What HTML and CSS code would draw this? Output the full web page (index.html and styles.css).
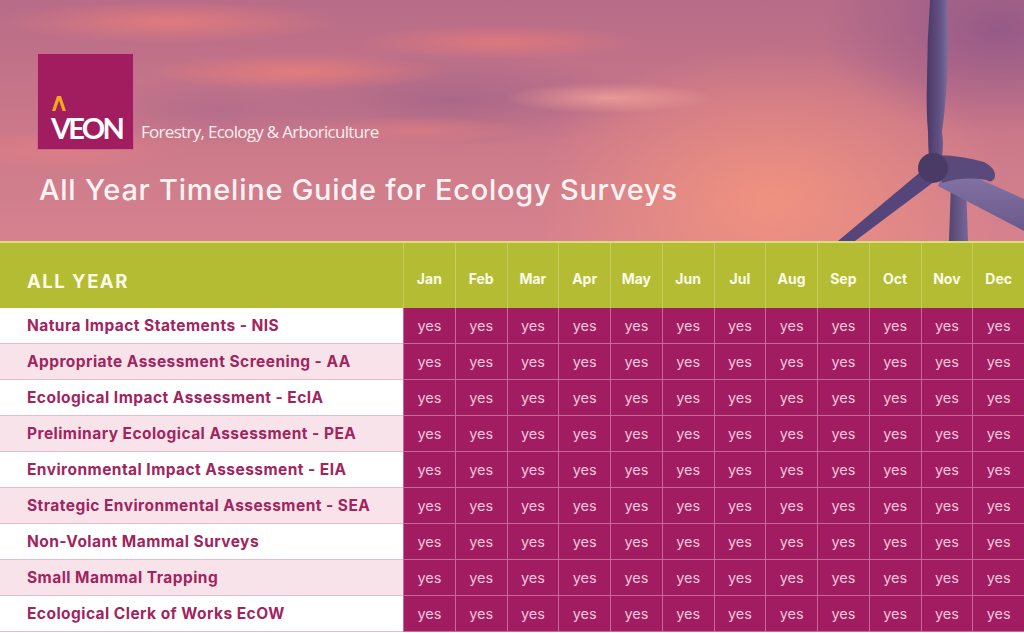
FILE: index.html
```html
<!DOCTYPE html>
<html lang="en">
<head>
<meta charset="utf-8">
<title>All Year Timeline Guide for Ecology Surveys</title>
<link rel="stylesheet" href="styles.css">
</head>
<body>
<div class="page">
  <header class="hero">
    <svg class="turbine" viewBox="0 0 200 241" width="200" height="241" aria-hidden="true">
      <defs>
        <linearGradient id="blade" x1="0" y1="0" x2="1" y2="0">
          <stop offset="0" stop-color="#4a3966"/>
          <stop offset="0.55" stop-color="#5f4e80"/>
          <stop offset="1" stop-color="#7d6e9c"/>
        </linearGradient>
        <linearGradient id="bladeR" x1="0" y1="0" x2="0" y2="1">
          <stop offset="0" stop-color="#8778a8"/>
          <stop offset="1" stop-color="#6a5a8c"/>
        </linearGradient>
        <linearGradient id="tower" x1="0" y1="0" x2="1" y2="0">
          <stop offset="0" stop-color="#55456f"/>
          <stop offset="1" stop-color="#76679a"/>
        </linearGradient>
      </defs>
      <!-- tower -->
      <path d="M127 182 L142 182 L144 241 L125 241 Z" fill="url(#tower)"/>
      <!-- down-left blade -->
      <path d="M100 169 L111 181 L31 241 L14 241 Z" fill="#55457a"/>
      <!-- right blade -->
      <path d="M122 164 L200 199 L200 231 L114 186 Z" fill="url(#bladeR)"/>
      <!-- up blade -->
      <path d="M106 0 L123 0 Q125 40 123 80 Q121 110 118 132 Q120 145 118 156 L105 158 Q104 145 104 132 Q102 110 103 80 Q103 40 106 0 Z" fill="url(#blade)"/>
      <!-- nacelle -->
      <path d="M114 155 Q140 156 160 162 Q172 168 171 177 Q168 184 162 180 Q140 176 118 183 Z" fill="#5a4a7c"/>
      <!-- hub -->
      <ellipse cx="109" cy="168" rx="15" ry="15" fill="#4a3a66"/>
    </svg>
    <div class="brand">
      <div class="logo">
        <span class="caret">
          <svg viewBox="0 0 14 15" width="14" height="15" aria-hidden="true"><path d="M0 15 L5 0 L9 0 L14 15 L10.6 15 L7 4.6 L3.4 15 Z" fill="#f2a71e"/></svg>
        </span>
        <span class="logo-word">VEON</span>
      </div>
      <span class="tagline">Forestry, Ecology &amp; Arboriculture</span>
    </div>
    <h1 class="title">All Year Timeline Guide for Ecology Surveys</h1>
  </header>

  <section class="table">
    <div class="cell head head-label">ALL YEAR</div>
    <div class="cell head">Jan</div>
    <div class="cell head">Feb</div>
    <div class="cell head">Mar</div>
    <div class="cell head">Apr</div>
    <div class="cell head">May</div>
    <div class="cell head">Jun</div>
    <div class="cell head">Jul</div>
    <div class="cell head">Aug</div>
    <div class="cell head">Sep</div>
    <div class="cell head">Oct</div>
    <div class="cell head">Nov</div>
    <div class="cell head">Dec</div>

    <div class="cell label">Natura Impact Statements - NIS</div>
    <div class="cell yes">yes</div><div class="cell yes">yes</div><div class="cell yes">yes</div><div class="cell yes">yes</div><div class="cell yes">yes</div><div class="cell yes">yes</div><div class="cell yes">yes</div><div class="cell yes">yes</div><div class="cell yes">yes</div><div class="cell yes">yes</div><div class="cell yes">yes</div><div class="cell yes">yes</div>

    <div class="cell label alt">Appropriate Assessment Screening - AA</div>
    <div class="cell yes">yes</div><div class="cell yes">yes</div><div class="cell yes">yes</div><div class="cell yes">yes</div><div class="cell yes">yes</div><div class="cell yes">yes</div><div class="cell yes">yes</div><div class="cell yes">yes</div><div class="cell yes">yes</div><div class="cell yes">yes</div><div class="cell yes">yes</div><div class="cell yes">yes</div>

    <div class="cell label">Ecological Impact Assessment - EcIA</div>
    <div class="cell yes">yes</div><div class="cell yes">yes</div><div class="cell yes">yes</div><div class="cell yes">yes</div><div class="cell yes">yes</div><div class="cell yes">yes</div><div class="cell yes">yes</div><div class="cell yes">yes</div><div class="cell yes">yes</div><div class="cell yes">yes</div><div class="cell yes">yes</div><div class="cell yes">yes</div>

    <div class="cell label alt">Preliminary Ecological Assessment - PEA</div>
    <div class="cell yes">yes</div><div class="cell yes">yes</div><div class="cell yes">yes</div><div class="cell yes">yes</div><div class="cell yes">yes</div><div class="cell yes">yes</div><div class="cell yes">yes</div><div class="cell yes">yes</div><div class="cell yes">yes</div><div class="cell yes">yes</div><div class="cell yes">yes</div><div class="cell yes">yes</div>

    <div class="cell label">Environmental Impact Assessment - EIA</div>
    <div class="cell yes">yes</div><div class="cell yes">yes</div><div class="cell yes">yes</div><div class="cell yes">yes</div><div class="cell yes">yes</div><div class="cell yes">yes</div><div class="cell yes">yes</div><div class="cell yes">yes</div><div class="cell yes">yes</div><div class="cell yes">yes</div><div class="cell yes">yes</div><div class="cell yes">yes</div>

    <div class="cell label alt">Strategic Environmental Assessment - SEA</div>
    <div class="cell yes">yes</div><div class="cell yes">yes</div><div class="cell yes">yes</div><div class="cell yes">yes</div><div class="cell yes">yes</div><div class="cell yes">yes</div><div class="cell yes">yes</div><div class="cell yes">yes</div><div class="cell yes">yes</div><div class="cell yes">yes</div><div class="cell yes">yes</div><div class="cell yes">yes</div>

    <div class="cell label">Non-Volant Mammal Surveys</div>
    <div class="cell yes">yes</div><div class="cell yes">yes</div><div class="cell yes">yes</div><div class="cell yes">yes</div><div class="cell yes">yes</div><div class="cell yes">yes</div><div class="cell yes">yes</div><div class="cell yes">yes</div><div class="cell yes">yes</div><div class="cell yes">yes</div><div class="cell yes">yes</div><div class="cell yes">yes</div>

    <div class="cell label alt">Small Mammal Trapping</div>
    <div class="cell yes">yes</div><div class="cell yes">yes</div><div class="cell yes">yes</div><div class="cell yes">yes</div><div class="cell yes">yes</div><div class="cell yes">yes</div><div class="cell yes">yes</div><div class="cell yes">yes</div><div class="cell yes">yes</div><div class="cell yes">yes</div><div class="cell yes">yes</div><div class="cell yes">yes</div>

    <div class="cell label">Ecological Clerk of Works EcOW</div>
    <div class="cell yes">yes</div><div class="cell yes">yes</div><div class="cell yes">yes</div><div class="cell yes">yes</div><div class="cell yes">yes</div><div class="cell yes">yes</div><div class="cell yes">yes</div><div class="cell yes">yes</div><div class="cell yes">yes</div><div class="cell yes">yes</div><div class="cell yes">yes</div><div class="cell yes">yes</div>
  </section>
</div>
</body>
</html>
```

FILE: styles.css
```css
html, body {
  margin: 0;
  padding: 0;
}

body {
  font-family: "Inter", "Liberation Sans", sans-serif;
  background: #ffffff;
}

.page {
  width: 1024px;
  height: 633px;
  overflow: hidden;
  display: flex;
  flex-direction: column;
}

.hero {
  position: relative;
  height: 241px;
  flex: 0 0 241px;
  box-sizing: border-box;
  padding: 53px 0 0 37px;
  overflow: hidden;
  background:
    radial-gradient(ellipse 150px 22px at 610px 98px, rgba(248, 168, 155, 0.7), rgba(248, 168, 155, 0) 70%),
    radial-gradient(ellipse 220px 26px at 300px 72px, rgba(238, 128, 120, 0.7), rgba(238, 128, 120, 0) 70%),
    radial-gradient(ellipse 240px 30px at 170px 22px, rgba(238, 128, 120, 0.7), rgba(238, 128, 120, 0) 70%),
    radial-gradient(ellipse 200px 24px at 500px 42px, rgba(236, 124, 118, 0.65), rgba(236, 124, 118, 0) 70%),
    radial-gradient(ellipse 160px 20px at 420px 130px, rgba(236, 130, 124, 0.5), rgba(236, 130, 124, 0) 70%),
    radial-gradient(ellipse 180px 30px at 60px 150px, rgba(236, 128, 128, 0.55), rgba(236, 128, 128, 0) 70%),
    radial-gradient(ellipse 340px 220px at 770px 200px, rgba(244, 148, 126, 0.9), rgba(244, 148, 126, 0) 70%),
    radial-gradient(ellipse 260px 150px at 1000px 30px, rgba(140, 85, 135, 0.8), rgba(140, 85, 135, 0) 70%),
    radial-gradient(ellipse 280px 70px at 450px 100px, rgba(140, 90, 135, 0.5), rgba(140, 90, 135, 0) 70%),
    radial-gradient(ellipse 200px 50px at 220px 110px, rgba(150, 95, 140, 0.4), rgba(150, 95, 140, 0) 70%),
    linear-gradient(180deg, #b86c88 0%, #c87689 45%, #d6828e 100%);
}

.turbine {
  position: absolute;
  right: 0;
  top: 0;
}

.brand {
  position: relative;
  display: flex;
  align-items: flex-end;
}

.logo {
  width: 97px;
  height: 97px;
  box-sizing: border-box;
  background: #a21c60;
  border: 1px solid #c96a95;
  display: flex;
  flex-direction: column;
  justify-content: flex-end;
  padding: 0 0 10px 13px;
}

.caret {
  display: block;
  line-height: 0;
  margin: 0 0 6px 1px;
}

.logo-word {
  color: #ffffff;
  font-family: "Lato", "Liberation Sans", sans-serif;
  font-weight: 700;
  font-size: 29px;
  line-height: 22px;
  letter-spacing: -2.8px;
}

.tagline {
  color: #fbeef0;
  font-family: "Open Sans", "Liberation Sans", sans-serif;
  font-size: 17px;
  line-height: 17px;
  margin: 0 0 10px 7px;
  letter-spacing: -0.7px;
}

.title {
  position: relative;
  margin: 23px 0 0 2px;
  color: #fdf3f3;
  font-family: "Inter", "Liberation Sans", sans-serif;
  font-weight: 500;
  font-size: 29px;
  line-height: 34px;
  letter-spacing: 0.75px;
}

.table {
  display: grid;
  grid-template-columns: 403px repeat(12, 1fr);
  grid-template-rows: 65px repeat(9, 36px);
  flex: 1 1 auto;
  border-top: 2px solid #d8de80;
}

.cell {
  display: flex;
  align-items: center;
  justify-content: center;
  box-sizing: border-box;
  font-family: "Inter", "Liberation Sans", sans-serif;
}

.head {
  background: #b4bc33;
  color: #fbfbe8;
  font-weight: 700;
  font-size: 14px;
  border-left: 1px solid #c6cc62;
  padding-top: 6px;
}

.head-label {
  justify-content: flex-start;
  padding-left: 27px;
  padding-top: 10px;
  font-size: 18.5px;
  letter-spacing: 1.5px;
  border-left: none;
}

.label {
  justify-content: flex-start;
  padding-left: 27px;
  background: #ffffff;
  color: #a2245e;
  font-weight: 700;
  font-size: 15.5px;
  letter-spacing: 0.45px;
  border-bottom: 1px solid #e6bccd;
}

.label.alt {
  background: #f8e3eb;
}

.yes {
  background: #a11c60;
  color: #f2c6da;
  font-size: 14.5px;
  border-left: 1px solid #c8689a;
  border-bottom: 1px solid #c8689a;
}
```
